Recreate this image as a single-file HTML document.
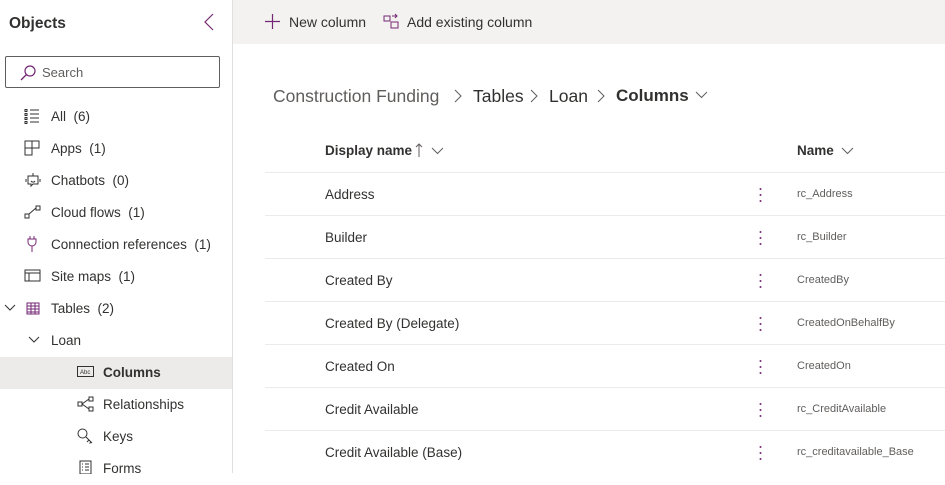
<!DOCTYPE html>
<html><head><style>
*{margin:0;padding:0;box-sizing:border-box}
body{width:945px;height:473px;overflow:hidden;background:#fff;font-family:"Liberation Sans",sans-serif;color:#323130;position:relative}
.side{position:absolute;left:0;top:0;width:233px;height:473px;border-right:1px solid #e1dfdd;background:#fff}
.title{position:absolute;left:9px;top:15px;font-size:15.5px;font-weight:bold;color:#323130}
.coll{position:absolute;left:203px;top:13px}
.search{position:absolute;left:5px;top:56px;width:215px;height:32px;border:1px solid #605e5c;border-radius:2px}
.search span{position:absolute;left:36px;top:8px;font-size:13px;color:#605e5c}
.item{position:absolute;font-size:13.5px;color:#323130;height:32px;line-height:32px}
.ic{position:absolute}
.sel{position:absolute;left:0;top:357px;width:232px;height:32px;background:#edebe9}
.top{position:absolute;left:233px;top:0;width:712px;height:44px;background:#f3f2f1}
.tb{position:absolute;top:14px;font-size:14px;color:#323130}
.bc{position:absolute;top:86px;font-size:17.5px;color:#323130}
.sep{position:absolute;top:89px}
.hdr{position:absolute;top:143px;font-size:13.5px;font-weight:bold;color:#323130}
.row{position:absolute;left:265px;width:680px;height:43px;border-top:1px solid #edebe9}
.row .d{position:absolute;left:60px;top:14px;font-size:13.5px;color:#323130}
.row .n{position:absolute;left:532px;top:15px;font-size:11px;color:#605e5c}
.row .m{position:absolute;left:494px;top:14px;width:3px;height:16px}
</style></head><body>
<div class="side">
<div class="title">Objects</div>
<svg class="coll" width="12" height="18" viewBox="0 0 12 18"><path d="M10 1 L2 9 L10 17" fill="none" stroke="#742774" stroke-width="1.2"/></svg>
<div class="search"><svg style="position:absolute;left:13px;top:7px" width="18" height="18" viewBox="0 0 18 18"><circle cx="11" cy="7" r="5" fill="none" stroke="#742774" stroke-width="1.2"/><path d="M7.5 10.5 L2 16" stroke="#742774" stroke-width="1.3"/></svg><span>Search</span></div>
<div class="sel"></div>
<svg class="ic" style="left:24px;top:108px" width="16" height="16" viewBox="0 0 16 16" fill="none" stroke="#323130"><path d="M6 2h9M6 6h9M6 10h9M6 14h9M1 1.5h2v2h-2zM1 5.5h2v2h-2zM1 9.5h2v2h-2zM1 13.5h2v2h-2z" stroke-width="1"/></svg>
<div class="item" style="left:51px;top:101px">All&nbsp; (6)</div>
<svg class="ic" style="left:24px;top:140px" width="16" height="16" viewBox="0 0 16 16" fill="none" stroke="#323130"><path d="M1 1h14v7H1zM1 1v14h7V1M8 8v7"/></svg>
<div class="item" style="left:51px;top:133px">Apps&nbsp; (1)</div>
<svg class="ic" style="left:25px;top:172px" width="16" height="17" viewBox="0 0 16 17" fill="none" stroke="#323130"><path d="M8 1v3M3 4h10v8H8l-2 2v-2H3zM1 7v3M15 7v3M6 9l1 1h2l1-1"/></svg>
<div class="item" style="left:51px;top:165px">Chatbots&nbsp; (0)</div>
<svg class="ic" style="left:24px;top:204px" width="18" height="16" viewBox="0 0 18 16" fill="none" stroke="#323130"><path d="M1 10h4v4H1zM12 2h4v4h-4zM5 10l7-6"/></svg>
<div class="item" style="left:51px;top:197px">Cloud flows&nbsp; (1)</div>
<svg class="ic" style="left:27px;top:236px" width="10" height="16" viewBox="0 0 10 16" fill="none" stroke="#742774"><path d="M3 0v3M7 0v3M1 3h8v3a4 4 0 0 1-8 0zM5 10v6"/></svg>
<div class="item" style="left:51px;top:229px">Connection references&nbsp; (1)</div>
<svg class="ic" style="left:24px;top:269px" width="17" height="14" viewBox="0 0 17 14" fill="none" stroke="#323130"><path d="M1 1h15v11H1zM1 4h15M5 4v8"/></svg>
<div class="item" style="left:51px;top:261px">Site maps&nbsp; (1)</div>
<svg class="ic" style="left:4px;top:304px" width="12" height="8" viewBox="0 0 12 8" fill="none" stroke="#323130"><path d="M1 1l5 5 5-5"/></svg>
<svg class="ic" style="left:26px;top:302px" width="14" height="13" viewBox="0 0 14 13" fill="none" stroke="#742774"><path d="M1 1h12v11H1zM1 4h12M1 7h12M1 10h12M5 1v11M9 1v11"/></svg>
<div class="item" style="left:51px;top:293px">Tables&nbsp; (2)</div>
<svg class="ic" style="left:28px;top:336px" width="12" height="8" viewBox="0 0 12 8" fill="none" stroke="#323130"><path d="M1 1l5 5 5-5"/></svg>
<div class="item" style="left:51px;top:325px">Loan</div>
<svg class="ic" style="left:77px;top:366px" width="17" height="12" viewBox="0 0 17 12"><rect x=".5" y=".5" width="16" height="10" fill="none" stroke="#323130"/><text x="3" y="8" font-size="6" fill="#323130" font-family="Liberation Sans">Abc</text></svg>
<div class="item" style="left:103px;top:357px;font-weight:bold">Columns</div>
<svg class="ic" style="left:77px;top:396px" width="17" height="16" viewBox="0 0 17 16" fill="none" stroke="#323130"><path d="M1 6h4v4H1zM12 1h4v4h-4zM12 11h4v4h-4zM5 8l7-5M5 8l7 5"/></svg>
<div class="item" style="left:103px;top:389px">Relationships</div>
<svg class="ic" style="left:77px;top:428px" width="17" height="17" viewBox="0 0 17 17" fill="none" stroke="#323130"><circle cx="5.5" cy="5.5" r="4.5"/><path d="M9 9l6 6M12 12l-2 2M14 14l-1.5 1.5"/></svg>
<div class="item" style="left:103px;top:421px">Keys</div>
<svg class="ic" style="left:79px;top:460px" width="13" height="14" viewBox="0 0 13 14" fill="none" stroke="#323130"><path d="M1 1h11v13H1zM3 4h1M6 4h4M3 7h1M6 7h4M3 10h1M6 10h4"/></svg>
<div class="item" style="left:103px;top:453px">Forms</div>
</div>
<div class="top"></div>
<svg style="position:absolute;left:264px;top:13px" width="17" height="17" viewBox="0 0 17 17" stroke="#742774" stroke-width="1.2"><path d="M8.5 1v15M1 8.5h15"/></svg>
<div class="tb" style="left:289px">New column</div>
<svg style="position:absolute;left:383px;top:13px" width="17" height="17" viewBox="0 0 17 17" fill="none" stroke="#742774"><path d="M1 3h6v5H1zM8 9h7v6H8zM9 3h5M12 1l2 2-2 2"/></svg>
<div class="tb" style="left:407px">Add existing column</div>
<div class="bc" style="left:273px;color:#605e5c">Construction Funding</div>
<svg class="sep" style="left:454px" width="8" height="14" viewBox="0 0 8 14" fill="none" stroke="#605e5c"><path d="M1 1l6 6-6 6"/></svg>
<div class="bc" style="left:473px">Tables</div>
<svg class="sep" style="left:530px" width="8" height="14" viewBox="0 0 8 14" fill="none" stroke="#605e5c"><path d="M1 1l6 6-6 6"/></svg>
<div class="bc" style="left:549px">Loan</div>
<svg class="sep" style="left:597px" width="8" height="14" viewBox="0 0 8 14" fill="none" stroke="#605e5c"><path d="M1 1l6 6-6 6"/></svg>
<div class="bc" style="left:616px;font-weight:bold;font-size:17px">Columns</div>
<svg style="position:absolute;left:695px;top:91px" width="13" height="8" viewBox="0 0 13 8" fill="none" stroke="#605e5c"><path d="M1 1l5.5 5.5L12 1"/></svg>
<div class="hdr" style="left:325px">Display name</div>
<svg style="position:absolute;left:415px;top:143px" width="8" height="14" viewBox="0 0 8 14" fill="none" stroke="#605e5c"><path d="M4 1v13M1 4l3-3 3 3"/></svg>
<svg style="position:absolute;left:431px;top:147px" width="13" height="8" viewBox="0 0 13 8" fill="none" stroke="#605e5c"><path d="M1 1l5.5 5.5L12 1"/></svg>
<div class="hdr" style="left:797px">Name</div>
<svg style="position:absolute;left:841px;top:147px" width="13" height="8" viewBox="0 0 13 8" fill="none" stroke="#605e5c"><path d="M1 1l5.5 5.5L12 1"/></svg>
<div class="row" style="top:172px"><div class="d">Address</div><svg class="m" viewBox="0 0 3 16"><circle cx="1.5" cy="2" r="1" fill="#742774"/><circle cx="1.5" cy="8" r="1" fill="#742774"/><circle cx="1.5" cy="14" r="1" fill="#742774"/></svg><div class="n">rc_Address</div></div>
<div class="row" style="top:215px"><div class="d">Builder</div><svg class="m" viewBox="0 0 3 16"><circle cx="1.5" cy="2" r="1" fill="#742774"/><circle cx="1.5" cy="8" r="1" fill="#742774"/><circle cx="1.5" cy="14" r="1" fill="#742774"/></svg><div class="n">rc_Builder</div></div>
<div class="row" style="top:258px"><div class="d">Created By</div><svg class="m" viewBox="0 0 3 16"><circle cx="1.5" cy="2" r="1" fill="#742774"/><circle cx="1.5" cy="8" r="1" fill="#742774"/><circle cx="1.5" cy="14" r="1" fill="#742774"/></svg><div class="n">CreatedBy</div></div>
<div class="row" style="top:301px"><div class="d">Created By (Delegate)</div><svg class="m" viewBox="0 0 3 16"><circle cx="1.5" cy="2" r="1" fill="#742774"/><circle cx="1.5" cy="8" r="1" fill="#742774"/><circle cx="1.5" cy="14" r="1" fill="#742774"/></svg><div class="n">CreatedOnBehalfBy</div></div>
<div class="row" style="top:344px"><div class="d">Created On</div><svg class="m" viewBox="0 0 3 16"><circle cx="1.5" cy="2" r="1" fill="#742774"/><circle cx="1.5" cy="8" r="1" fill="#742774"/><circle cx="1.5" cy="14" r="1" fill="#742774"/></svg><div class="n">CreatedOn</div></div>
<div class="row" style="top:387px"><div class="d">Credit Available</div><svg class="m" viewBox="0 0 3 16"><circle cx="1.5" cy="2" r="1" fill="#742774"/><circle cx="1.5" cy="8" r="1" fill="#742774"/><circle cx="1.5" cy="14" r="1" fill="#742774"/></svg><div class="n">rc_CreditAvailable</div></div>
<div class="row" style="top:430px"><div class="d">Credit Available (Base)</div><svg class="m" viewBox="0 0 3 16"><circle cx="1.5" cy="2" r="1" fill="#742774"/><circle cx="1.5" cy="8" r="1" fill="#742774"/><circle cx="1.5" cy="14" r="1" fill="#742774"/></svg><div class="n">rc_creditavailable_Base</div></div>
</body></html>
